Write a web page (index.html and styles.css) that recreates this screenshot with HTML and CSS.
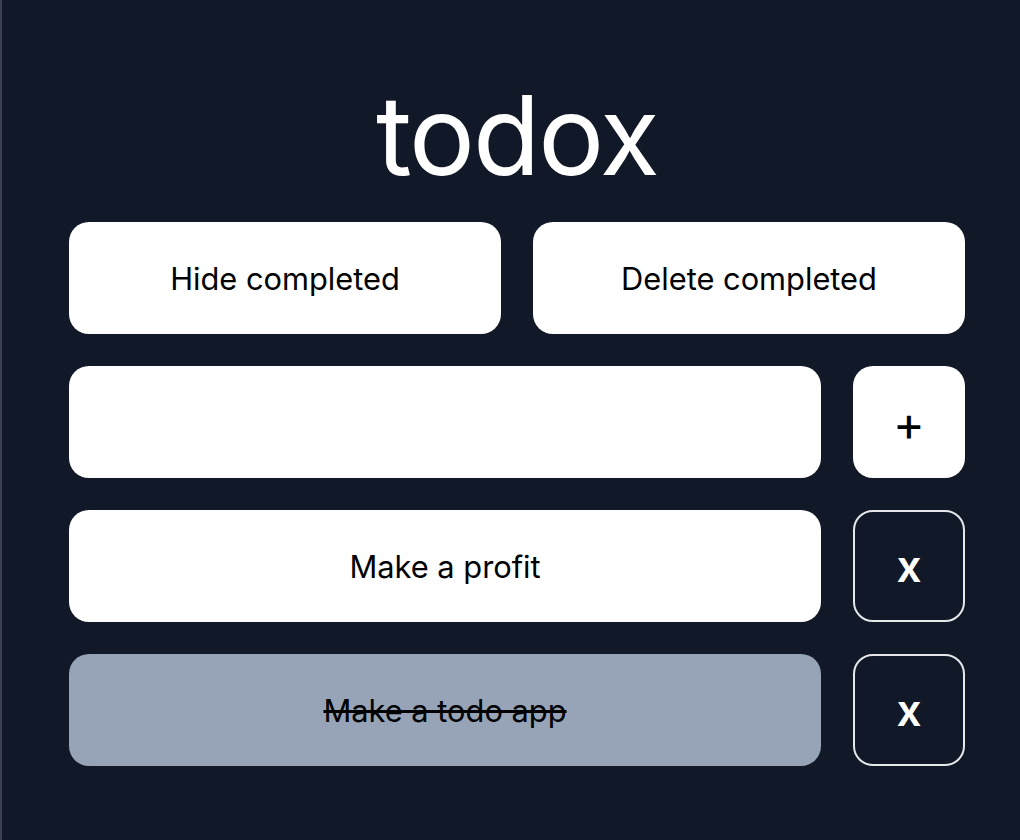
FILE: index.html
```html
<!DOCTYPE html>
<html>
<head>
<meta charset="utf-8">
<link rel="stylesheet" href="styles.css">
</head>
<body>
<main class="app">
  <h1 class="title">todox</h1>
  <div class="row two">
    <button class="btn">Hide completed</button>
    <button class="btn">Delete completed</button>
  </div>
  <div class="row">
    <input class="field" type="text">
    <button class="square add">+</button>
  </div>
  <div class="row">
    <div class="item">Make a profit</div>
    <button class="square del">x</button>
  </div>
  <div class="row">
    <div class="item done"><span>Make a todo app</span></div>
    <button class="square del">x</button>
  </div>
</main>
</body>
</html>
```
FILE: styles.css
```css
html, body {
  margin: 0;
  padding: 0;
  height: 100%;
}
body {
  background: #111827;
  border-left: 2px solid #3a4050;
  box-sizing: border-box;
  font-family: Inter, "Noto Sans", sans-serif;
}
.app {
  display: flex;
  flex-direction: column;
  gap: 32px;
  padding: 80px 55px 0 67px;
}
.title {
  margin: 0 0 0 0;
  color: #fff;
  font-weight: 400;
  font-size: 110px;
  line-height: 110px;
  text-align: center;
  letter-spacing: -2px;
  height: 110px;
}
.row {
  display: flex;
  gap: 32px;
  height: 112px;
}
.row.two > .btn {
  flex: 1;
}
.btn, .field, .item, .square {
  border: none;
  border-radius: 20px;
  background: #fff;
  color: #000;
  font-family: Inter, "Noto Sans", sans-serif;
  font-size: 30.8px;
  box-sizing: border-box;
  margin: 0;
  padding: 0;
}
.field, .item {
  flex: 1;
}
.item {
  display: flex;
  align-items: center;
  justify-content: center;
}
.item.done {
  background: #97a3b6;
  text-decoration: line-through;
}
.square {
  width: 112px;
  flex: none;
  display: flex;
  align-items: center;
  justify-content: center;
}
.add {
  font-size: 48px;
  font-weight: 400;
  padding-top: 2px;
}
.del {
  background: transparent;
  border: 2px solid #e5e7eb;
  color: #fff;
  font-size: 44px;
  font-weight: 600;
}
```
